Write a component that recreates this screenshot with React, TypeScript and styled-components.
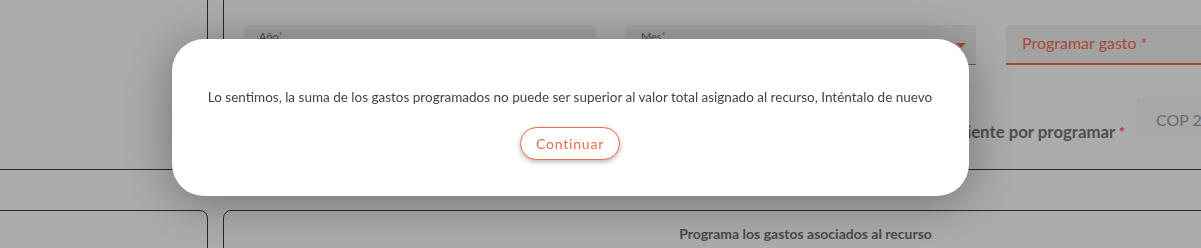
import React from 'react';
import styled, { createGlobalStyle } from 'styled-components';

const GlobalStyle = createGlobalStyle`
    body {
        margin: 0;
        overflow: hidden;
        background: #ffffff;
        font-family: Lato, "Open Sans", sans-serif;
    }
`;

const Page = styled.div`
    display: grid;
    grid-template-columns: 218px 1165px;
    column-gap: 15px;
    row-gap: 40px;
    margin: -30px 0 0 -10px;
`;

const Card = styled.section<{ $tall?: boolean }>`
    box-sizing: border-box;
    border: 1px solid #3c3c3c;
    border-radius: 8px;
    height: ${(p) => (p.$tall ? '200px' : '120px')};
    background: #ffffff;
`;

const FormCard = styled(Card)`
    padding: 54px 20px 0 20px;
`;

const FieldGrid = styled.div`
    display: grid;
    grid-template-columns: 352px 350px 352px;
    column-gap: 30px;
`;

const Field = styled.div<{ $active?: boolean }>`
    position: relative;
    box-sizing: border-box;
    height: 40px;
    padding: 6px 15px 0;
    background: #f2f2f2;
    border-radius: 4px 4px 0 0;
    border-bottom: ${(p) => (p.$active ? '2px solid #ff6a55' : '1px solid #8a8a8a')};
`;

const SmallLabel = styled.span`
    display: block;
    font-size: 11px;
    line-height: 12px;
    color: #6e6e6e;

    b {
        color: #ff5a45;
        font-weight: 400;
        vertical-align: top;
        font-size: 9px;
        line-height: 9px;
    }
`;

const BigLabel = styled.span`
    display: block;
    padding-top: 2px;
    padding-left: 1px;
    font-size: 16px;
    color: #ff6a55;
`;

const Arrow = styled.span`
    position: absolute;
    right: 10px;
    top: 18px;
    width: 0;
    height: 0;
    border-left: 5px solid transparent;
    border-right: 5px solid transparent;
    border-top: 5px solid #ff6a55;
`;

const PendingRow = styled.div`
    display: flex;
    justify-content: flex-end;
    align-items: flex-end;
    gap: 12px;
    margin-top: 32px;
`;

const PendingLabel = styled.span`
    font-size: 16.8px;
    line-height: 20px;
    font-weight: 700;
    color: #767676;
    margin-bottom: -5px;

    b {
        color: #ff5a45;
        font-size: 14px;
        vertical-align: top;
    }
`;

const CopInput = styled.div`
    box-sizing: border-box;
    width: 230px;
    height: 40px;
    padding: 15px 19px 0;
    line-height: 16px;
    background: #f9f9f9;
    font-size: 16px;
    color: #a0a0a0;
    white-space: nowrap;
`;

const SectionTitle = styled.h3`
    margin: 14px 0 0;
    text-align: center;
    font-size: 14px;
    font-weight: 700;
    color: #6e6e6e;
`;

const Backdrop = styled.div`
    position: fixed;
    inset: 0;
    display: flex;
    align-items: center;
    justify-content: center;
    padding: 0 61px 13px 0;
    background: rgba(0, 0, 0, 0.33);
`;

const Dialog = styled.div`
    box-sizing: border-box;
    width: 797px;
    height: 157px;
    padding-top: 50px;
    display: flex;
    flex-direction: column;
    align-items: center;
    gap: 22px;
    background: #ffffff;
    border-radius: 32px;
    box-shadow: 0 6px 50px rgba(0, 0, 0, 0.35);
`;

const Message = styled.p`
    margin: 0;
    font-size: 13.5px;
    line-height: 16px;
    color: #444444;
`;

const ContinueButton = styled.button`
    box-sizing: border-box;
    height: 33px;
    padding: 0 15px;
    border: 1px solid #ee6b4d;
    border-radius: 17px;
    background: #ffffff;
    color: #ee6b4d;
    font-family: Lato, sans-serif;
    font-size: 14px;
    letter-spacing: 0.8px;
    box-shadow: 0 2px 5px rgba(0, 0, 0, 0.28);
    cursor: pointer;
`;

const App: React.FC = () => {
    return (
        <>
            <GlobalStyle />
            <Page>
                <Card $tall />
                <FormCard $tall>
                    <FieldGrid>
                        <Field>
                            <SmallLabel>
                                Año<b>*</b>
                            </SmallLabel>
                        </Field>
                        <Field>
                            <SmallLabel>
                                Mes<b>*</b>
                            </SmallLabel>
                            <Arrow />
                        </Field>
                        <Field $active>
                            <BigLabel>Programar gasto *</BigLabel>
                        </Field>
                    </FieldGrid>
                    <PendingRow>
                        <PendingLabel>
                            Valor pendiente por programar <b>*</b>
                        </PendingLabel>
                        <CopInput>COP 2.000.000</CopInput>
                    </PendingRow>
                </FormCard>
                <Card />
                <Card>
                    <SectionTitle>Programa los gastos asociados al recurso</SectionTitle>
                </Card>
            </Page>
            <Backdrop>
                <Dialog>
                    <Message>
                        Lo sentimos, la suma de los gastos programados no puede ser superior al valor total
                        asignado al recurso, Inténtalo de nuevo
                    </Message>
                    <ContinueButton type="button">Continuar</ContinueButton>
                </Dialog>
            </Backdrop>
        </>
    );
};

export default App;
